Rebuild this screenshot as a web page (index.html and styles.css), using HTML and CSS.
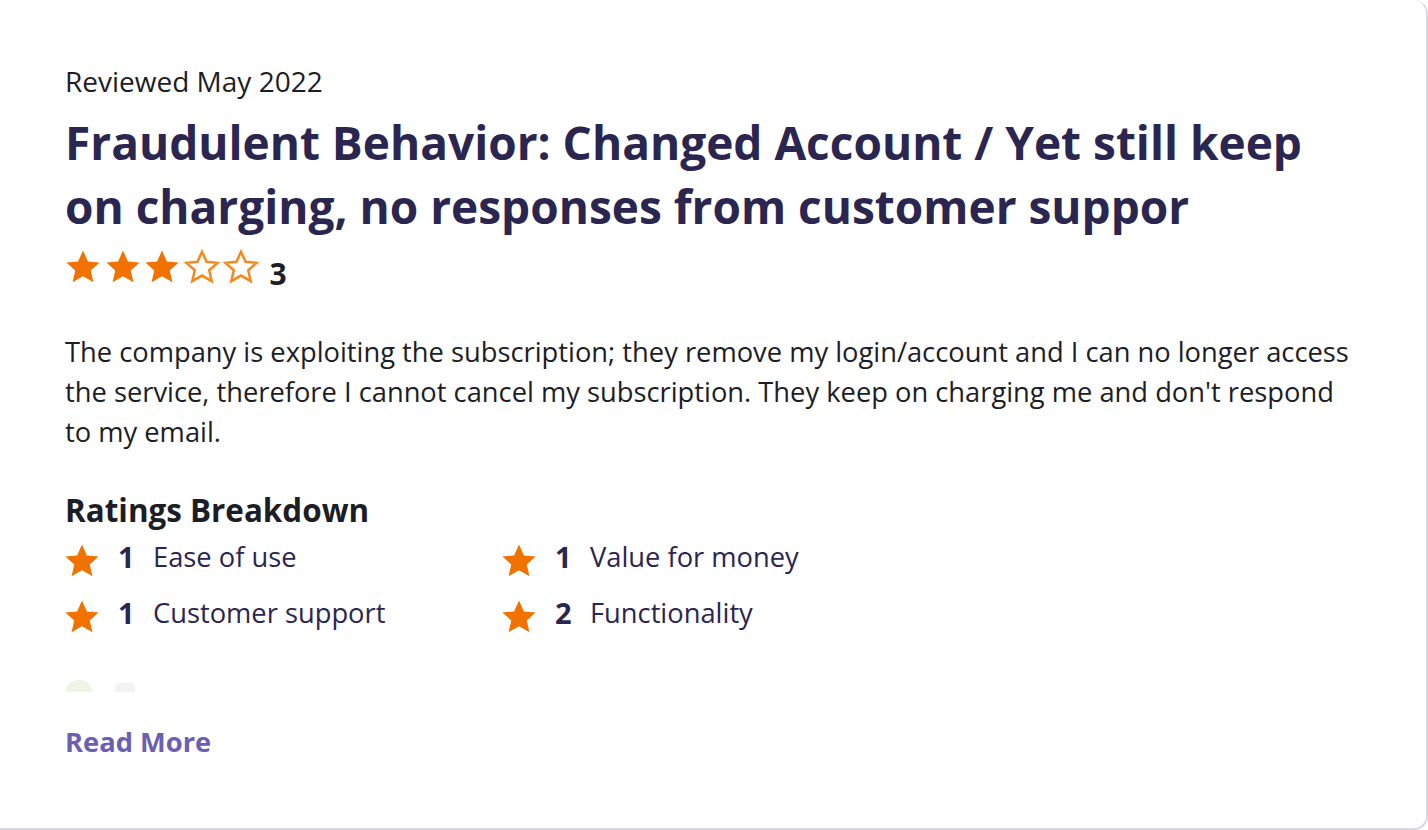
FILE: index.html
```html
<!DOCTYPE html>
<html lang="en">
<head>
<meta charset="utf-8">
<title>Review</title>
<link rel="stylesheet" href="styles.css">
</head>
<body>
<div class="card">
  <div class="date">Reviewed May 2022</div>
  <h2 class="title">Fraudulent Behavior: Changed Account / Yet still keep on charging, no responses from customer suppor</h2>
  <div class="overall">
    <svg class="star" viewBox="0 0 24 24"><path class="fill" d="M12 1.6l3.1 6.9 7.4.7-5.6 5 1.7 7.4L12 17.8l-6.6 3.8 1.7-7.4-5.6-5 7.4-.7z"/></svg>
    <svg class="star" viewBox="0 0 24 24"><path class="fill" d="M12 1.6l3.1 6.9 7.4.7-5.6 5 1.7 7.4L12 17.8l-6.6 3.8 1.7-7.4-5.6-5 7.4-.7z"/></svg>
    <svg class="star" viewBox="0 0 24 24"><path class="fill" d="M12 1.6l3.1 6.9 7.4.7-5.6 5 1.7 7.4L12 17.8l-6.6 3.8 1.7-7.4-5.6-5 7.4-.7z"/></svg>
    <svg class="star" viewBox="0 0 24 24"><path class="line" transform="translate(12 12) scale(0.93) translate(-12 -12)" d="M12 1.6l3.1 6.9 7.4.7-5.6 5 1.7 7.4L12 17.8l-6.6 3.8 1.7-7.4-5.6-5 7.4-.7z"/></svg>
    <svg class="star" viewBox="0 0 24 24"><path class="line" transform="translate(12 12) scale(0.93) translate(-12 -12)" d="M12 1.6l3.1 6.9 7.4.7-5.6 5 1.7 7.4L12 17.8l-6.6 3.8 1.7-7.4-5.6-5 7.4-.7z"/></svg>
    <span class="score">3</span>
  </div>
  <p class="text">The company is exploiting the subscription; they remove my login/account and I can no longer access the service, therefore I cannot cancel my subscription. They keep on charging me and don't respond to my email.</p>
  <h3 class="bd-title">Ratings Breakdown</h3>
  <div class="breakdown">
    <div class="item">
      <svg class="mstar" viewBox="0 0 24 24"><path class="fill" d="M12 1.6l3.1 6.9 7.4.7-5.6 5 1.7 7.4L12 17.8l-6.6 3.8 1.7-7.4-5.6-5 7.4-.7z"/></svg>
      <span class="num">1</span><span class="label">Ease of use</span>
    </div>
    <div class="item">
      <svg class="mstar" viewBox="0 0 24 24"><path class="fill" d="M12 1.6l3.1 6.9 7.4.7-5.6 5 1.7 7.4L12 17.8l-6.6 3.8 1.7-7.4-5.6-5 7.4-.7z"/></svg>
      <span class="num">1</span><span class="label">Value for money</span>
    </div>
    <div class="item">
      <svg class="mstar" viewBox="0 0 24 24"><path class="fill" d="M12 1.6l3.1 6.9 7.4.7-5.6 5 1.7 7.4L12 17.8l-6.6 3.8 1.7-7.4-5.6-5 7.4-.7z"/></svg>
      <span class="num">1</span><span class="label">Customer support</span>
    </div>
    <div class="item">
      <svg class="mstar" viewBox="0 0 24 24"><path class="fill" d="M12 1.6l3.1 6.9 7.4.7-5.6 5 1.7 7.4L12 17.8l-6.6 3.8 1.7-7.4-5.6-5 7.4-.7z"/></svg>
      <span class="num">2</span><span class="label">Functionality</span>
    </div>
  </div>
  <div class="faded">
    <span class="dot"></span><span class="bar"></span>
  </div>
  <a class="more" href="#">Read More</a>
</div>
</body>
</html>
```

FILE: styles.css
```css
html, body {
  margin: 0;
  padding: 0;
  background: #ffffff;
}
body {
  font-family: "Open Sans", "Noto Sans", sans-serif;
  width: 1428px;
  height: 830px;
  overflow: hidden;
}
.card {
  box-sizing: border-box;
  width: 1428px;
  height: 830px;
  background: #ffffff;
  border-right: 2px solid #d8d8df;
  border-bottom: 2px solid #d8d8df;
  border-radius: 0 14px 14px 0;
  padding: 65px 63px 0 65px;
}
.date {
  font-size: 28px;
  line-height: 32px;
  color: #1d1d25;
}
.title {
  margin: 13px 0 0;
  font-size: 46px;
  line-height: 64px;
  font-weight: 700;
  color: #2b2650;
  letter-spacing: 0;
}
.overall {
  display: flex;
  align-items: center;
  gap: 1.5px;
  margin-top: 4px;
  height: 50px;
}
.star {
  width: 38px;
  height: 38px;
  margin-left: -1px;
}
.star + .star {
  margin-left: 0;
}
.fill {
  fill: #f27200;
}
.line {
  fill: none;
  stroke: #f58a1c;
  stroke-width: 1.7;
}
.score {
  font-size: 30px;
  font-weight: 700;
  color: #1d1d25;
  margin-left: 8px;
  margin-top: 12px;
}
.text {
  margin: 40px 0 0;
  font-size: 27.3px;
  line-height: 40px;
  color: #1d1d25;
}
.bd-title {
  margin: 38px 0 0;
  font-size: 31.4px;
  line-height: 40px;
  font-weight: 700;
  color: #1d1d25;
}
.breakdown {
  display: grid;
  grid-template-columns: 437px 437px;
  row-gap: 16px;
  margin-top: 6px;
}
.item {
  display: flex;
  align-items: center;
  height: 40px;
}
.mstar {
  width: 38px;
  height: 38px;
  margin-left: -2px;
  margin-top: 10px;
}
.num {
  font-size: 29px;
  font-weight: 700;
  color: #2b2650;
  margin-left: 17px;
  width: 35px;
}
.label {
  font-size: 27.3px;
  color: #2b2650;
}
.faded {
  display: flex;
  align-items: flex-start;
  gap: 22px;
  height: 12px;
  margin-top: 48px;
  overflow: hidden;
}
.dot {
  width: 28px;
  height: 28px;
  border-radius: 50%;
  background: #eef5e4;
}
.bar {
  width: 20px;
  height: 20px;
  border-radius: 4px;
  background: #f3f3f6;
  margin-top: 3px;
}
.more {
  display: inline-block;
  margin-top: 30px;
  font-size: 27.3px;
  font-weight: 700;
  line-height: 40px;
  color: #6c5eb0;
  text-decoration: none;
}
```
